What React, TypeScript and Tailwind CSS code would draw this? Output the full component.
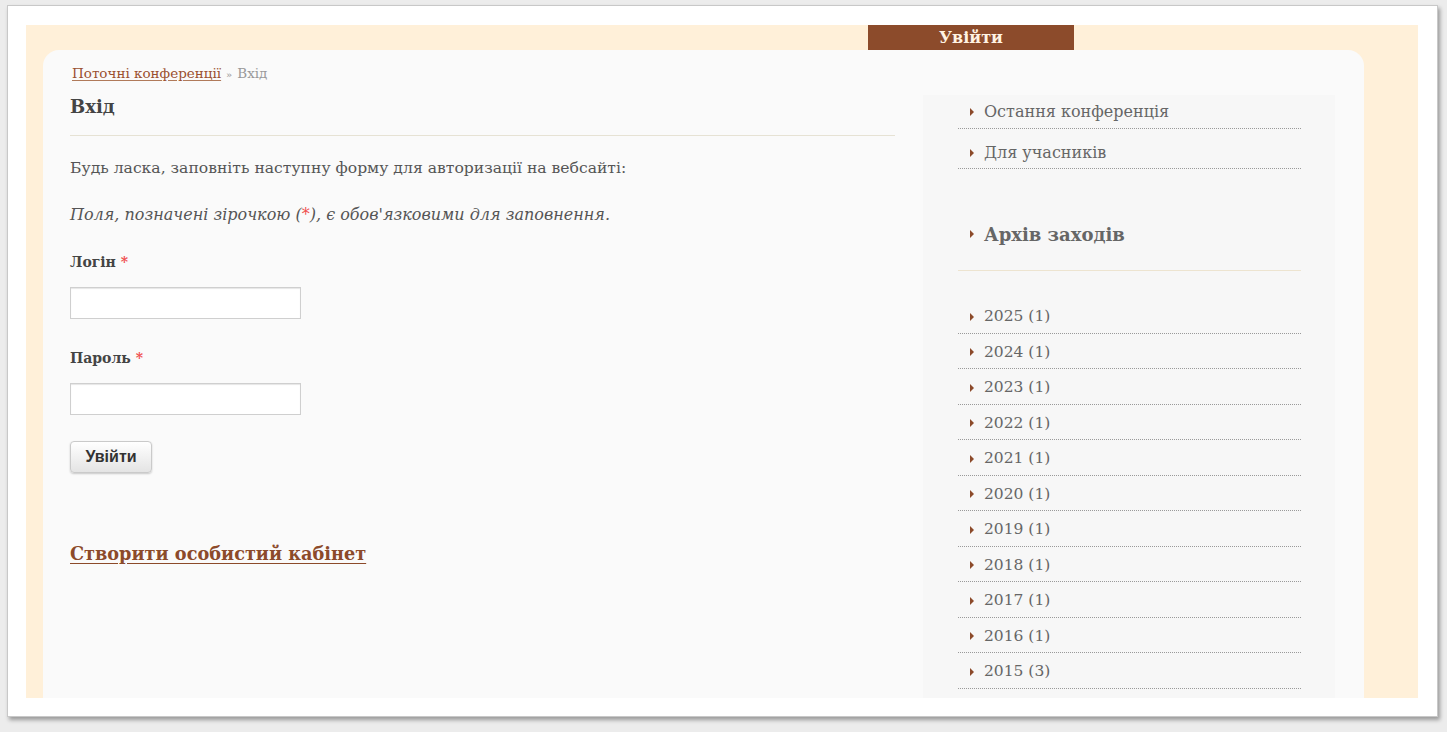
const serif = 'font-["DejaVu_Serif","Liberation_Serif",serif]';

const menuItems = ['Остання конференція', 'Для учасників'];

const years = [
  { year: '2025', count: 1 },
  { year: '2024', count: 1 },
  { year: '2023', count: 1 },
  { year: '2022', count: 1 },
  { year: '2021', count: 1 },
  { year: '2020', count: 1 },
  { year: '2019', count: 1 },
  { year: '2018', count: 1 },
  { year: '2017', count: 1 },
  { year: '2016', count: 1 },
  { year: '2015', count: 3 },
];

const Bullet = () => (
  <svg width="4" height="8" viewBox="0 0 4 8" className="shrink-0">
    <path d="M0 0 L4 4 L0 8 Z" fill="#8c4a2a" />
  </svg>
);

const SideItem = ({ label }: { label: string }) => (
  <li className="flex items-center gap-[10px] pl-[12px] pt-[3px] h-[35.5px] border-b border-dotted border-[#9a9a9a]">
    <Bullet />
    <span className="text-[15.5px] text-[#666]">{label}</span>
  </li>
);

export default function App() {
  return (
    <div className={`w-[1447px] h-[732px] bg-[#ececec] pt-[5px] pl-[7px] ${serif}`}>
      {/* screenshot frame */}
      <div className="w-[1431px] h-[712px] bg-white border border-[#c8c8c8] shadow-[2px_3px_4px_rgba(0,0,0,0.35)] pt-[19px] pl-[18px] pr-[19px] pb-[18px]">
        <div className="h-full bg-[#fff0d9] flex flex-col overflow-hidden">
          {/* top bar */}
          <div className="h-[25px] shrink-0 flex pl-[842px]">
            <a className="w-[206px] h-full bg-[#8c4b2b] text-[#fff3e3] text-[16px] font-bold flex items-center justify-center">
              Увійти
            </a>
          </div>

          {/* main card */}
          <div className="ml-[17px] mr-[54px] flex-1 bg-[#fafafa] rounded-tl-[16px] rounded-tr-[16px] flex pl-[27px] pr-[29px]">
            {/* content */}
            <main className="w-[825px] shrink-0 text-[#444]">
              <div className="pt-[13px] h-[45px] text-[13.5px] text-[#999]">
                <a className="text-[#9a5030] underline underline-offset-2 decoration-[#b07a5a] ml-[2px]">Поточні конференції</a>
                <span className="text-[10px] mx-[5px]">»</span>
                <span>Вхід</span>
              </div>
              <h1 className="text-[18px] leading-[26px] font-bold text-[#444] -mt-[1px] pb-[15px] border-b border-[#e6e2d4]">
                Вхід
              </h1>

              <p className="mt-[20px] text-[15.6px] leading-[24px] text-[#555]">
                Будь ласка, заповніть наступну форму для авторизації на вебсайті:
              </p>
              <p className="mt-[23px] text-[16px] leading-[24px] italic text-[#555]">
                Поля, позначені зірочкою (<span className="text-[#f04f4f] not-italic">*</span>), є обов'язковими для
                заповнення.
              </p>

              <div className="mt-[25px]">
                <label className="block text-[14px] leading-[21px] font-bold text-[#444]">
                  Логін <span className="text-[#f04f4f]">*</span>
                </label>
                <input className="block mt-[14px] w-[231px] h-[32px] bg-white border border-[#cfcfcf] shadow-[inset_0_1px_1px_rgba(0,0,0,0.1)]" />
              </div>

              <div className="mt-[29px]">
                <label className="block text-[14px] leading-[21px] font-bold text-[#444]">
                  Пароль <span className="text-[#f04f4f]">*</span>
                </label>
                <input
                  type="password"
                  className="block mt-[14px] w-[231px] h-[32px] bg-white border border-[#cfcfcf] shadow-[inset_0_1px_1px_rgba(0,0,0,0.1)]"
                />
              </div>

              <button className="block mt-[26px] w-[82px] h-[32px] rounded-[4px] border border-[#cacaca] bg-gradient-to-b from-white to-[#e4e4e4] shadow-[0_1px_2px_rgba(0,0,0,0.2)] font-['Liberation_Sans',Arial,sans-serif] text-[16px] font-bold text-[#333]">
                Увійти
              </button>

              <div className="mt-[68px] leading-[26px]">
                <a className="text-[17.7px] font-bold text-[#8c4a2a] underline underline-offset-[3px]">
                  Створити особистий кабінет
                </a>
              </div>
            </main>

            {/* sidebar */}
            <aside className="ml-[28px] mt-[45px] w-[412px] bg-[#f7f7f7] pl-[35px] pr-[34px]">
              <ul>
                {menuItems.map((m, i) => (
                  <li
                    key={m}
                    className={`flex items-center gap-[10px] pl-[12px] border-b border-dotted border-[#9a9a9a] ${
                      i === 0 ? 'h-[34px]' : 'h-[40px] pt-[14px] pb-[6px]'
                    }`}
                  >
                    <Bullet />
                    <span className="text-[16px] text-[#666]">{m}</span>
                  </li>
                ))}
              </ul>

              <div className="mt-[52px] pb-[23px] border-b border-[#ede4d0]">
                <div className="h-[26px] flex items-center gap-[10px] pl-[12px]">
                  <Bullet />
                  <h2 className="text-[18px] font-bold text-[#666]">Архів заходів</h2>
                </div>
              </div>

              <ul className="mt-[27px]">
                {years.map((y) => (
                  <SideItem key={y.year} label={`${y.year} (${y.count})`} />
                ))}
              </ul>
            </aside>
          </div>
        </div>
      </div>
    </div>
  );
}
